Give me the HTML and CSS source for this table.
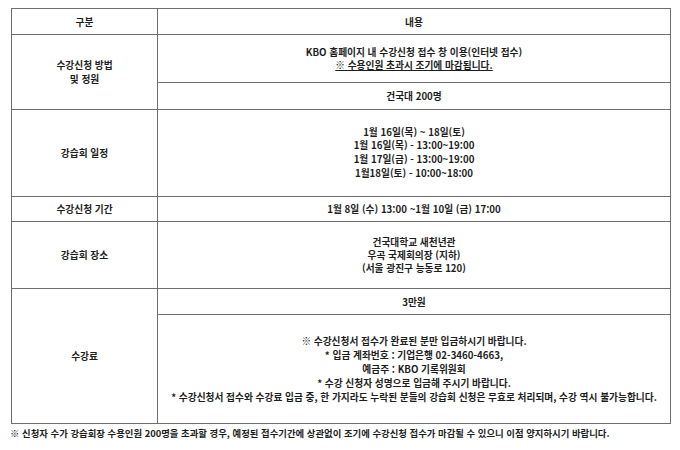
FILE: index.html
```html
<!DOCTYPE html>
<html lang="ko">
<head>
<meta charset="utf-8">
<link rel="stylesheet" href="styles.css">
</head>
<body>
<table class="info">
  <colgroup>
    <col class="col-label">
    <col class="col-content">
  </colgroup>
  <tr class="r-head">
    <td>구분</td>
    <td>내용</td>
  </tr>
  <tr class="r-method">
    <td rowspan="2" class="lines14">수강신청 방법<br>및 정원</td>
    <td class="tight">KBO 홈페이지 내 수강신청 접수 창 이용(인터넷 접수)<br><span class="uline">※ 수용인원 초과시 조기에 마감됩니다.</span></td>
  </tr>
  <tr class="r-capacity">
    <td>건국대 200명</td>
  </tr>
  <tr class="r-schedule">
    <td>강습회 일정</td>
    <td class="lines">1월 16일(목) ~ 18일(토)<br>1월 16일(목) - 13:00~19:00<br>1월 17일(금) - 13:00~19:00<br>1월18일(토) - 10:00~18:00</td>
  </tr>
  <tr class="r-period">
    <td>수강신청 기간</td>
    <td>1월 8일 (수) 13:00 ~1월 10일 (금) 17:00</td>
  </tr>
  <tr class="r-place">
    <td>강습회 장소</td>
    <td class="lines13">건국대학교 새천년관<br>우곡 국제회의장 (지하)<br>(서울 광진구 능동로 120)</td>
  </tr>
  <tr class="r-fee">
    <td rowspan="2">수강료</td>
    <td>3만원</td>
  </tr>
  <tr class="r-fee-note">
    <td class="lines14">※ 수강신청서 접수가 완료된 분만 입금하시기 바랍니다.<br>* 입금 계좌번호 : 기업은행 02-3460-4663,<br>예금주 : KBO 기록위원회<br>* 수강 신청자 성명으로 입금해 주시기 바랍니다.<br>* 수강신청서 접수와 수강료 입금 중, 한 가지라도 누락된 분들의 강습회 신청은 무효로 처리되며, 수강 역시 불가능합니다.</td>
  </tr>
</table>
<p class="footnote">※ 신청자 수가 강습회장 수용인원 200명을 초과할 경우, 예정된 접수기간에 상관없이 조기에 수강신청 접수가 마감될 수 있으니 이점 양지하시기 바랍니다.</p>
</body>
</html>
```

FILE: styles.css
```css
html, body {
  margin: 0;
  padding: 0;
  background: #ffffff;
}

body {
  font-family: "Noto Sans CJK KR", "Noto Sans", sans-serif;
  font-size: 9.7px;
  font-weight: 700;
  color: #1e1e1e;
  padding: 8px 0 0 11px;
}

.info {
  border-collapse: collapse;
  width: 660px;
  table-layout: fixed;
}

.col-label {
  width: 146px;
}

.info td {
  border: 1px solid #6e6e6e;
  text-align: center;
  vertical-align: middle;
  padding: 0 2px;
  line-height: 14px;
}

.r-head td { height: 25px; }
.r-method td { height: 47px; }
.r-capacity td { height: 26px; }
.r-schedule td { height: 86px; }
.r-period td { height: 24px; }
.r-place td { height: 66px; }
.r-fee td { height: 25px; }
.r-fee-note td { height: 108px; }

.info td.tight { line-height: 12.5px; }
.info td.lines { line-height: 13.7px; }
.info td.lines13 { line-height: 13px; }
.info td.lines14 { line-height: 14px; }

.uline {
  text-decoration: underline;
}

.footnote {
  margin: 2px 0 0 -1px;
  font-size: 9.4px;
  line-height: 14px;
}
```
